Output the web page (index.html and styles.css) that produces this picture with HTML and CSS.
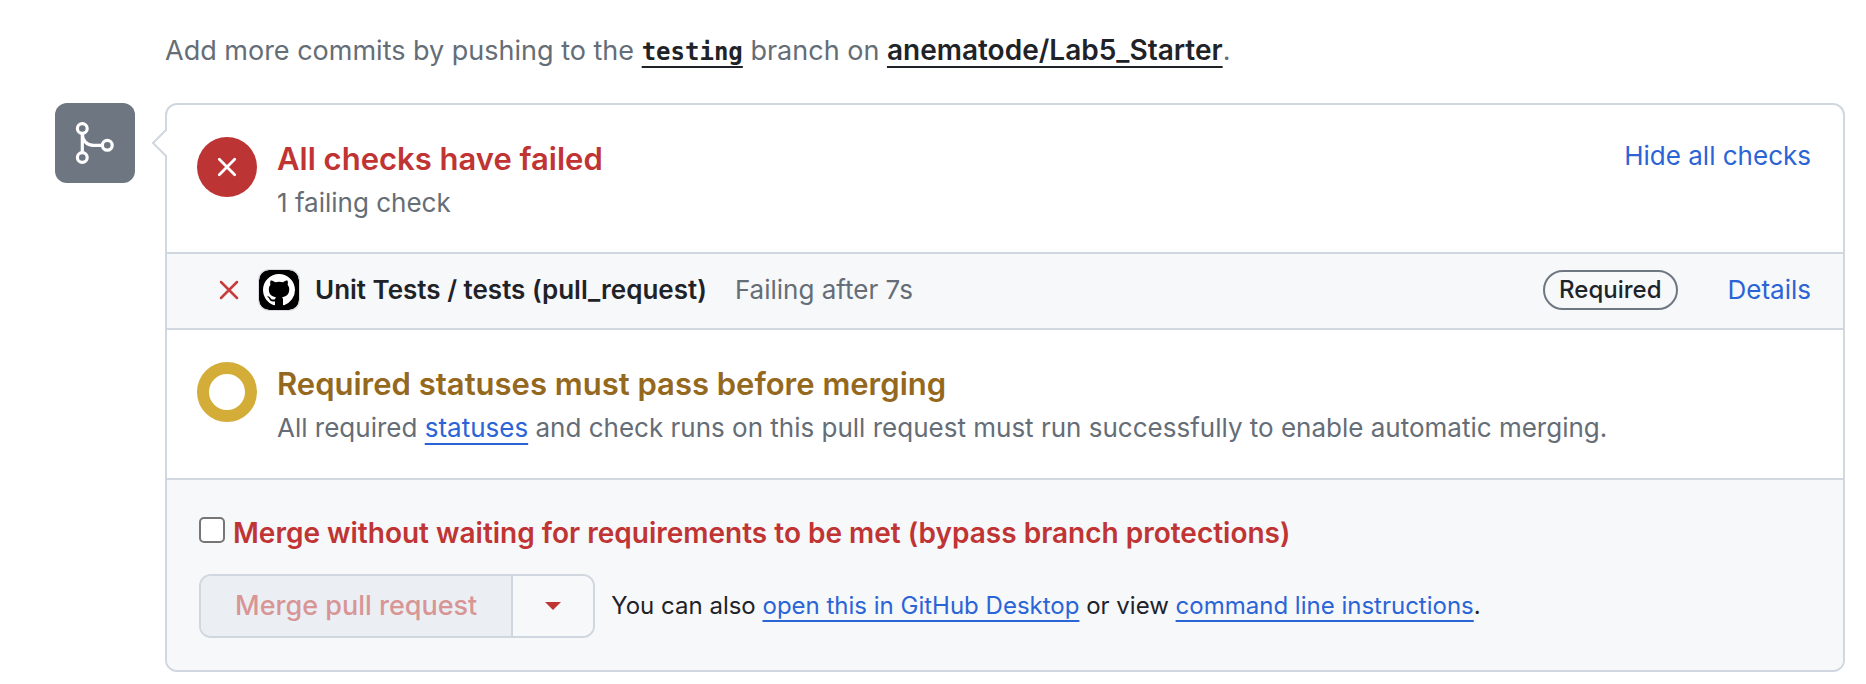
FILE: index.html
```html
<!DOCTYPE html>
<html lang="en">
<head>
<meta charset="utf-8">
<title>Pull request checks</title>
<link rel="stylesheet" href="styles.css">
</head>
<body>
<main class="page">
  <p class="push-hint">Add more commits by pushing to the <a class="strong-link branch" href="#">testing</a> branch on <a class="strong-link" href="#">anematode/Lab5_Starter</a>.</p>
  <div class="merge">
    <div class="merge-badge">
      <svg width="48" height="48" viewBox="0 0 24 24" fill="none" stroke="#fff" stroke-width="1.6" aria-hidden="true">
        <circle cx="5.65" cy="4.75" r="2.45"/><circle cx="5.65" cy="19.25" r="2.45"/><circle cx="18.15" cy="13.15" r="2.45"/>
        <path d="M5.65 7.25v9.5M5.65 7.25c0 3.5 2.3 5.9 5.6 5.9h4.4"/>
      </svg>
    </div>
    <div class="box">
      <svg class="caret" width="16" height="32" viewBox="0 0 16 32" aria-hidden="true"><path d="M16 2 2 16l14 14" fill="#fff" stroke="#d0d7de" stroke-width="2"/></svg>
      <section class="status">
        <span class="dot dot-fail">
          <svg width="20" height="20" viewBox="0 0 20 20" fill="none" stroke="#fff" stroke-width="2.8" stroke-linecap="round" aria-hidden="true"><path d="M2.3 2.3l15.4 15.4M17.7 2.3L2.3 17.7"/></svg>
        </span>
        <div class="status-text">
          <h2 class="title fail">All checks have failed</h2>
          <p class="sub">1 failing check</p>
        </div>
        <button class="toggle" type="button">Hide all checks</button>
      </section>
      <div class="check">
        <svg class="check-x" width="20" height="20" viewBox="0 0 20 20" fill="none" stroke="#cf222e" stroke-width="2.5" stroke-linecap="round" aria-hidden="true"><path d="M2 2l16 16M18 2L2 18"/></svg>
        <svg class="check-logo" width="40" height="40" viewBox="0 0 40 40" aria-hidden="true">
          <rect width="40" height="40" rx="10" fill="#000"/>
          <g transform="translate(4 4)"><path fill="#fff" fill-rule="evenodd" transform="scale(2)" d="M8 0C3.58 0 0 3.58 0 8c0 3.54 2.29 6.53 5.47 7.59.4.07.55-.17.55-.38 0-.19-.01-.82-.01-1.49-2.01.37-2.53-.49-2.69-.94-.09-.23-.48-.94-.82-1.13-.28-.15-.68-.52-.01-.53.63-.01 1.08.58 1.23.82.72 1.21 1.87.87 2.33.66.07-.52.28-.87.51-1.07-1.78-.2-3.64-.89-3.64-3.95 0-.87.31-1.59.82-2.15-.08-.2-.36-1.02.08-2.12 0 0 .67-.21 2.2.82.64-.18 1.32-.27 2-.27s1.36.09 2 .27c1.53-1.04 2.2-.82 2.2-.82.44 1.1.16 1.92.08 2.12.51.56.82 1.27.82 2.15 0 3.07-1.87 3.75-3.65 3.95.29.25.54.73.54 1.48 0 1.07-.01 1.93-.01 2.2 0 .21.15.46.55.38A8.01 8.01 0 0 0 16 8c0-4.42-3.58-8-8-8z"/></g>
        </svg>
        <strong class="check-name">Unit Tests / tests (pull_request)</strong>
        <span class="check-note">Failing after 7s</span>
        <span class="pill">Required</span>
        <a class="link" href="#">Details</a>
      </div>
      <section class="status status-last">
        <span class="dot dot-wait"></span>
        <div class="status-text">
          <h2 class="title wait">Required statuses must pass before merging</h2>
          <p class="sub">All required <a class="link underlined" href="#">statuses</a> and check runs on this pull request must run successfully to enable automatic merging.</p>
        </div>
      </section>
      <div class="actions">
        <label class="bypass"><input class="bypass-box" type="checkbox">Merge without waiting for requirements to be met (bypass branch protections)</label>
        <div class="merge-row">
          <div class="split">
            <button class="split-main" type="button" disabled>Merge pull request</button>
            <button class="split-more" type="button" aria-label="Select merge method"><svg width="16" height="8" viewBox="0 0 16 8" aria-hidden="true"><path d="M0 0h16L8 8z" fill="#c03434"/></svg></button>
          </div>
          <p class="also">You can also <a class="link underlined" href="#">open this in GitHub Desktop</a> or view <a class="link underlined" href="#">command line instructions</a>.</p>
        </div>
      </div>
    </div>
  </div>
</main>
</body>
</html>
```
FILE: styles.css
```css
* { box-sizing: border-box; }
body {
  margin: 0;
  background: #fff;
  color: #1f2328;
  font: 26px/42px Inter, "Liberation Sans", sans-serif;
}
p, h2 { margin: 0; }
button { font: inherit; cursor: pointer; }
.page { padding: 30px 21px 12px 55px; }
.push-hint { margin: 0 0 31px 110px; color: #656d76; font-size: 27px; }
.strong-link {
  color: #1f2328;
  font-size: 28px;
  line-height: 32px;
  font-weight: 600;
  text-decoration: underline 2px;
  text-underline-offset: 6px;
  text-decoration-skip-ink: none;
}
.branch { font-family: "DejaVu Sans Mono", monospace; font-size: 24px; font-weight: 700; }
.merge { display: flex; gap: 30px; align-items: flex-start; }
.merge-badge {
  display: flex;
  flex: none;
  align-items: center;
  justify-content: center;
  width: 80px;
  height: 80px;
  border-radius: 12px;
  background: #6e7781;
}
.box { position: relative; flex: 1; border: 2px solid #d0d7de; border-radius: 12px; }
.caret { position: absolute; left: -16px; top: 22px; }
.status { display: flex; gap: 20px; padding: 32px 32px 28px 30px; border-bottom: 2px solid #d0d7de; }
.status-last { padding-bottom: 29px; }
.status-text { flex: 1; }
.dot { display: flex; flex: none; align-items: center; justify-content: center; width: 60px; height: 60px; border-radius: 50%; }
.dot-fail { background: #bc3433; }
.dot-wait { border: 12px solid #d4ac38; }
.title { margin-bottom: 1px; font-size: 31px; line-height: 44px; font-weight: 600; }
.fail { color: #c03434; }
.wait { color: #956820; }
.sub { color: #656d76; }
.toggle { align-self: flex-start; padding: 0; border: 0; background: none; color: #2b64d6; line-height: 38px; }
.link { color: #2b64d6; text-decoration: none; }
.underlined { text-decoration: underline 2px; text-underline-offset: 6px; text-decoration-skip-ink: none; }
.check {
  display: flex;
  align-items: center;
  padding: 15px 32px 17px 52px;
  border-bottom: 2px solid #d0d7de;
  background: #f6f8fa;
}
.check-x { margin-right: 20px; stroke: #c93c3c; }
.check-logo { margin-right: 16px; border-radius: 10px; box-shadow: 0 0 0 1px #d8dadd; }
.check-name { font-weight: 600; }
.check-note { margin-left: 28px; color: #656d76; }
.pill {
  margin: 0 50px 0 auto;
  padding: 0 14px;
  border: 2px solid #6e7781;
  border-radius: 20px;
  font-size: 24px;
  line-height: 36px;
  font-weight: 500;
}
.actions { padding: 32px; border-radius: 0 0 10px 10px; background: #f6f8fa; }
.bypass { display: flex; gap: 8px; width: max-content; max-width: 100%; color: #c03434; font-size: 28px; font-weight: 600; }
.bypass-box {
  flex: none;
  width: 26px;
  height: 26px;
  margin: 5px 0 0;
  appearance: none;
  border: 2px solid #767676;
  border-radius: 5px;
  background: #fff;
}
.merge-row { display: flex; align-items: center; gap: 16px; margin-top: 20px; }
.split { display: flex; flex: none; height: 64px; border: 2px solid #d0d7de; border-radius: 12px; overflow: hidden; }
.split-main { padding: 0 34px; border: 0; background: #ebeff4; color: #d89596; font-size: 27px; font-weight: 500; }
.split-more { display: flex; align-items: center; justify-content: center; width: 82px; padding: 0; border: 0; border-left: 2px solid #d0d7de; background: #f6f8fa; }
.also { font-size: 24px; }
```
